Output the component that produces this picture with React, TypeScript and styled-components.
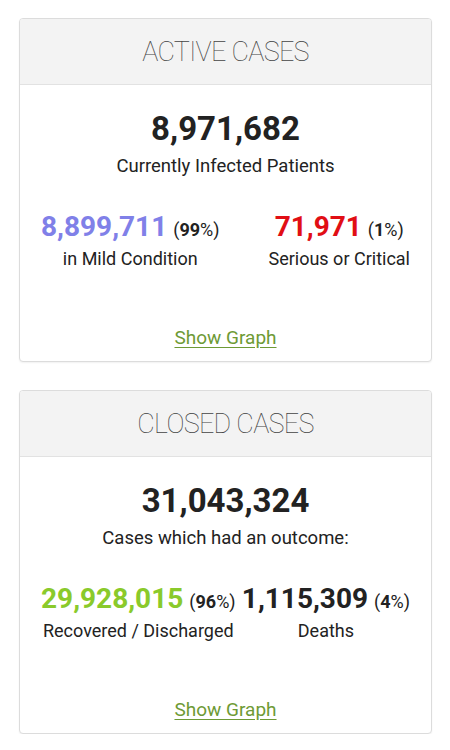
import React from 'react';
import styled, { createGlobalStyle } from 'styled-components';

const GlobalStyle = createGlobalStyle`
  body {
    margin: 0;
    background: #fff;
    font-family: Roboto, "Liberation Sans", sans-serif;
    color: #222;
  }
`;

type Stat = {
  value: string;
  percent: string;
  label: string;
  color: string;
};

type Panel = {
  title: string;
  total: string;
  caption: string;
  stats: [Stat, Stat];
};

const PANELS: Panel[] = [
  {
    title: 'ACTIVE CASES',
    total: '8,971,682',
    caption: 'Currently Infected Patients',
    stats: [
      { value: '8,899,711', percent: '99', label: 'in Mild Condition', color: '#8080e8' },
      { value: '71,971', percent: '1', label: 'Serious or Critical', color: '#e10e14' },
    ],
  },
  {
    title: 'CLOSED CASES',
    total: '31,043,324',
    caption: 'Cases which had an outcome:',
    stats: [
      { value: '29,928,015', percent: '96', label: 'Recovered / Discharged', color: '#8aca2b' },
      { value: '1,115,309', percent: '4', label: 'Deaths', color: '#222' },
    ],
  },
];

const App = () => {
  return (
    <>
      <GlobalStyle />
      <Page>
        {PANELS.map((panel) => (
          <Card key={panel.title}>
            <Header>{panel.title}</Header>
            <Body>
              <Total>{panel.total}</Total>
              <Caption>{panel.caption}</Caption>
              <StatRow>
                {panel.stats.map((s) => (
                  <StatCol key={s.label}>
                    <div>
                      <StatValue $color={s.color}>{s.value}</StatValue>
                      <Percent>
                        (<b>{s.percent}</b>%)
                      </Percent>
                    </div>
                    <StatLabel>{s.label}</StatLabel>
                  </StatCol>
                ))}
              </StatRow>
              <GraphLink href="#">Show Graph</GraphLink>
            </Body>
          </Card>
        ))}
      </Page>
    </>
  );
};

export default App;

const Page = styled.div`
  display: flex;
  flex-direction: column;
  gap: 28px;
  padding: 18px 18px 0 19px;
`;

const Card = styled.div`
  border: 1px solid #dcdcdc;
  border-radius: 4px;
  background: #fff;
  box-shadow: 0 1px 2px rgba(0, 0, 0, 0.06);
  overflow: hidden;
`;

const Header = styled.div`
  height: 65px;
  display: flex;
  align-items: center;
  justify-content: center;
  background: #f3f3f3;
  border-bottom: 1px solid #e2e2e2;
  font-family: Roboto, sans-serif;
  font-weight: 100;
  font-size: 27px;
  letter-spacing: -0.7px;
  color: #444;
`;

const Body = styled.div`
  display: flex;
  flex-direction: column;
  align-items: center;
  padding: 25px 21px 11px;
`;

const Total = styled.div`
  font-size: 33px;
  line-height: 38px;
  font-weight: 700;
  color: #222;
`;

const Caption = styled.div`
  margin-top: 6px;
  font-size: 18.5px;
  line-height: 24px;
`;

const StatRow = styled.div`
  align-self: stretch;
  display: flex;
  justify-content: space-between;
  margin-top: 32px;
`;

const StatCol = styled.div`
  display: flex;
  flex-direction: column;
  align-items: center;
  text-align: center;
  white-space: nowrap;
`;

const StatValue = styled.span<{ $color: string }>`
  font-size: 28px;
  line-height: 34px;
  font-weight: 700;
  color: ${(p) => p.$color};
`;

const Percent = styled.span`
  margin-left: 6px;
  font-size: 18px;
  color: #222;

  b {
    font-weight: 700;
  }
`;

const StatLabel = styled.div`
  margin-top: 3px;
  font-size: 18px;
  line-height: 24px;
`;

const GraphLink = styled.a`
  margin-top: 55px;
  font-size: 19px;
  line-height: 24px;
  color: #6e9a35;
  text-decoration: underline;
  text-underline-offset: 3px;
`;
